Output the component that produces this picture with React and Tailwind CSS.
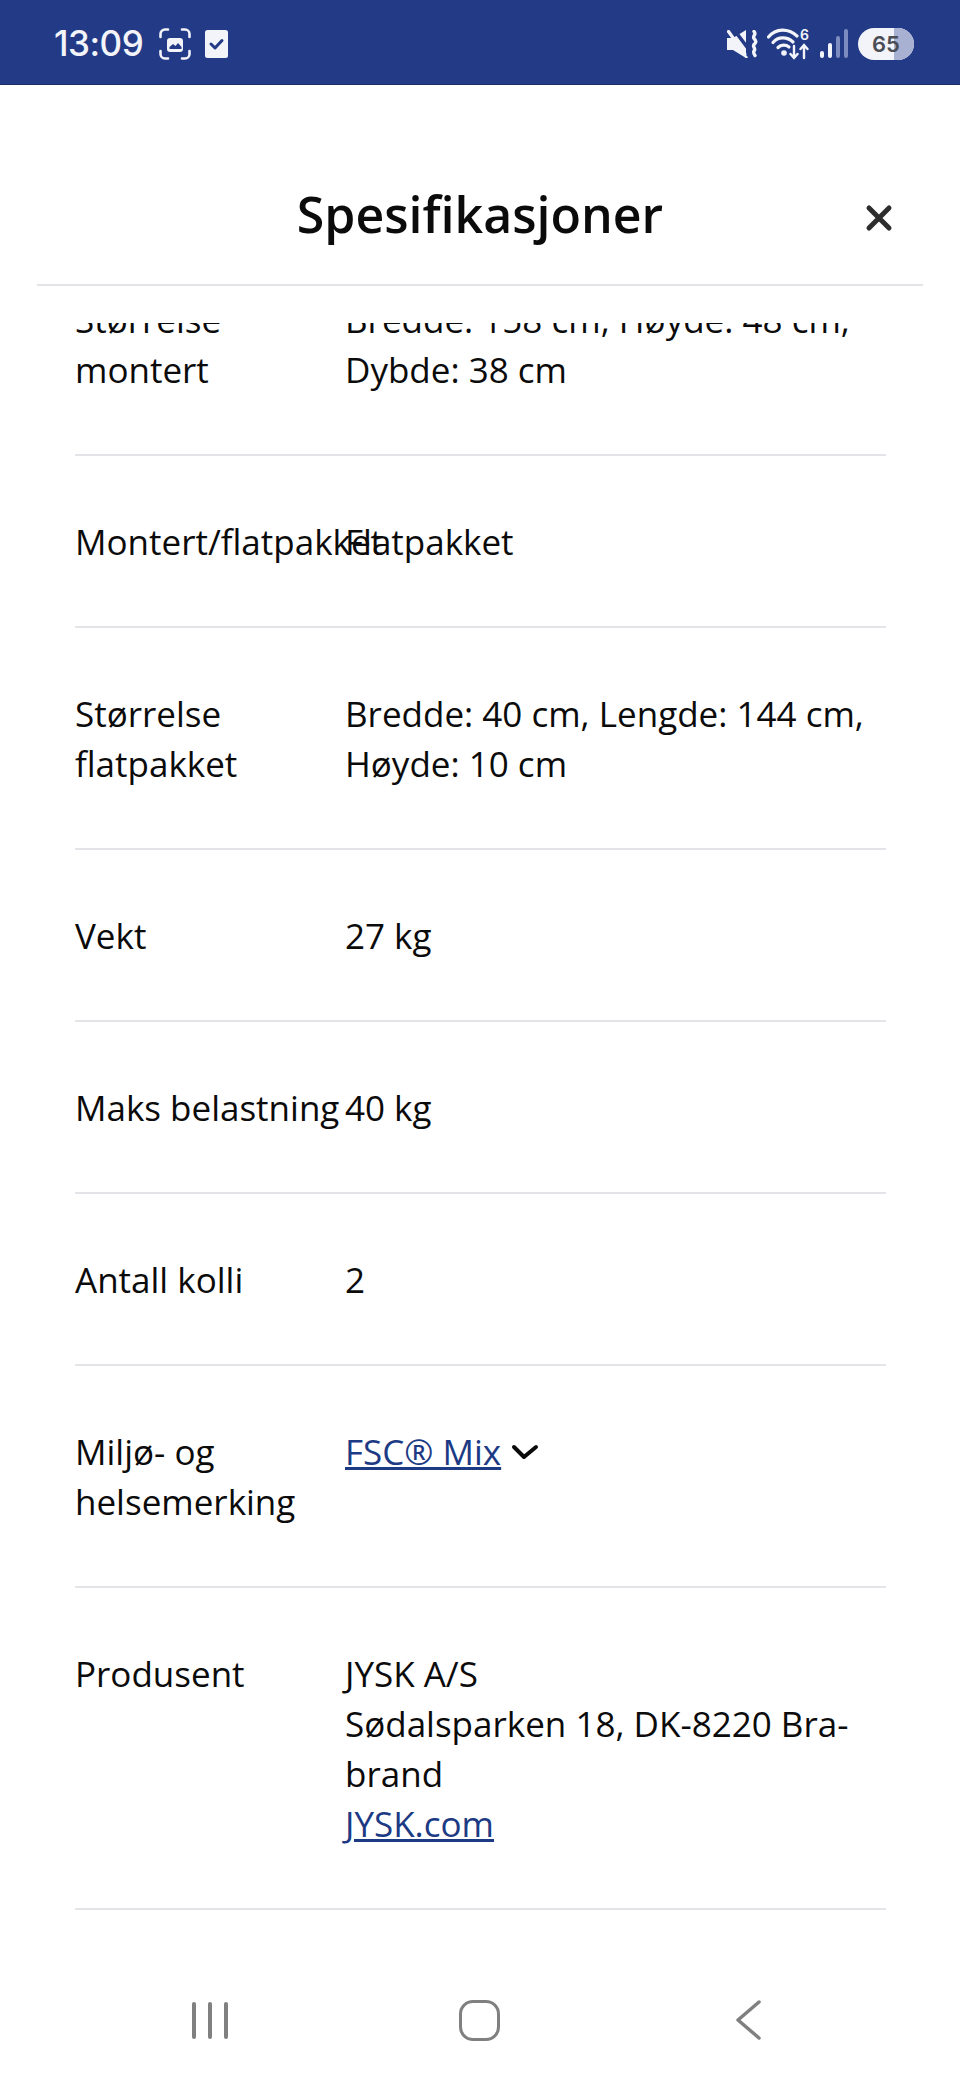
import React from "react";

const rows = [
  { label: "Størrelse montert", value: "Bredde: 158 cm, Høyde: 48 cm, Dybde: 38 cm" },
  { label: "Montert/flatpakket", value: "Flatpakket" },
  { label: "Størrelse flatpakket", value: "Bredde: 40 cm, Lengde: 144 cm, Høyde: 10 cm" },
  { label: "Vekt", value: "27 kg" },
  { label: "Maks belastning", value: "40 kg" },
  { label: "Antall kolli", value: "2" },
];

function StatusLeft() {
  return (
    <div className="flex items-center">
      <span className="w-[88px] text-[35px] font-medium leading-none text-[#f2f4fa] font-['Inter',sans-serif] tracking-[-0.5px]">13:09</span>
      <svg width="32" height="32" viewBox="0 0 32 32" fill="none" className="ml-[17px]" stroke="#f2f4fa" strokeWidth="2.6" strokeLinecap="round">
        <path d="M1.500 9V6a4.500 4.500 0 0 1 4.500-4.500h3M23 1.500h3a4.500 4.500 0 0 1 4.500 4.500v3M30.500 23v3a4.500 4.500 0 0 1-4.500 4.500h-3M9 30.500H6a4.500 4.500 0 0 1-4.500-4.500v-3" />
        <rect x="8" y="10" width="16" height="14" rx="3" fill="#f2f4fa" stroke="none" />
        <path d="M10.500 21v-2l3.500-3 2.500 2 2.500-3 3.500 4v2z" fill="#233b86" stroke="none" />
      </svg>
      <svg width="23" height="28" viewBox="0 0 23 28" className="ml-[14px]">
        <rect width="23" height="28" rx="2.500" fill="#f2f4fa" />
        <path d="M6 14l4 4 7-7.500" fill="none" stroke="#233b86" strokeWidth="3" strokeLinecap="round" strokeLinejoin="round" />
      </svg>
    </div>
  );
}

function StatusRight() {
  return (
    <div className="flex items-center">
      <svg width="32" height="28" viewBox="0 0 32 28" fill="#f2f4fa">
        <path d="M0 8h6L19 0v28L6 20H0z" />
        <path d="M5 -3l21 28" stroke="#233b86" strokeWidth="3.500" />
        <path d="M1.500 1.500l18 25" stroke="#f2f4fa" strokeWidth="3.200" strokeLinecap="round" />
        <path d="M20 24l6 6" stroke="#233b86" strokeWidth="3" />
        <path d="M27 1.500c3 3-2 4.500 0 7 2.500 2.500 2.500 3.500 0 6-2 2.500 2.500 4 0 6.500-1 1.500 0 3 1 4.500" fill="none" stroke="#f2f4fa" strokeWidth="3.400" strokeLinecap="round" />
      </svg>
      <div className="relative ml-[8px] h-[32px] w-[42px]">
        <svg width="42" height="32" viewBox="0 0 42 32" fill="none" stroke="#f2f4fa" strokeLinecap="round">
          <path d="M1.500 9C9 0 21 0 30 8" strokeWidth="3.200" />
          <path d="M6 14.500c5-6 14-6 20-.5" strokeWidth="3.200" />
          <path d="M11 19.500c3-3 8-3 11-.5" strokeWidth="3.200" />
          <circle cx="17" cy="25" r="2.800" fill="#f2f4fa" stroke="none" />
          <path d="M27 18v12M23.500 26l3.500 4 3.500-4M37 30V17M33.500 21l3.500-4 3.500 4" strokeWidth="2.400" />
        </svg>
        <span className="absolute right-0 top-0 text-[14px] font-semibold leading-none text-[#f2f4fa] font-['Inter',sans-serif]">6</span>
      </div>
      <div className="ml-[11px] flex items-end gap-[4px]">
        <span className="h-[7px] w-[4px] rounded-full bg-[#f2f4fa]" />
        <span className="h-[15px] w-[4px] rounded-full bg-[#f2f4fa]" />
        <span className="h-[22px] w-[4px] rounded-full bg-[#7d8cbf]" />
        <span className="h-[29px] w-[4px] rounded-full bg-[#7d8cbf]" />
      </div>
      <div className="relative ml-[10px] flex h-[32px] w-[56px] items-center justify-center overflow-hidden rounded-full bg-[#f2f4fa]">
        <div className="absolute inset-y-0 right-0 w-[20px] bg-[#a9b1d3]" />
        <span className="relative text-[22px] font-semibold leading-none text-[#4b4d55] font-['Inter',sans-serif]">65</span>
      </div>
    </div>
  );
}

function SpecRow({ label, children }) {
  return (
    <div className="grid grid-cols-[270px_1fr] border-b-2 border-[#e2e4e7] pt-[61px] pb-[59px]">
      <div className="pr-1">{label}</div>
      <div>{children}</div>
    </div>
  );
}

export default function App() {
  return (
    <div className="flex h-[2080px] w-[960px] flex-col overflow-hidden bg-white text-[#0b0b0b] font-['Open_Sans',sans-serif]">
      <div className="flex h-[85px] shrink-0 items-center justify-between border-b border-[#1b2c66] bg-[#233b86] pl-[54px] pr-[46px] pt-[3px]">
        <StatusLeft />
        <StatusRight />
      </div>

      <div className="relative mx-[37px] flex h-[201px] shrink-0 items-center justify-center border-b-2 border-[#e2e4e7] pt-[58px]">
        <h1 className="text-[50px] font-semibold leading-none">Spesifikasjoner</h1>
        <svg width="28" height="28" viewBox="0 0 28 28" className="absolute right-[30px] top-[119px]" stroke="#2d2d2d" strokeWidth="5" strokeLinecap="round">
          <path d="M4 4l20 20M24 4L4 24" />
        </svg>
      </div>

      {/* list is scrolled a little, so the first row sits under the header edge */}
      <div className="mt-[37px] h-[1637px] shrink-0 overflow-hidden pl-[75px] pr-[74px] text-[35px] leading-[50px]">
        <div className="-mt-[89px]">
          {rows.map((r) => (
            <SpecRow key={r.label} label={r.label}>
              {r.value}
            </SpecRow>
          ))}
          <SpecRow label="Miljø- og helsemerking">
            <span className="inline-flex items-center">
              <a className="text-[#1d3a84] underline">FSC® Mix</a>
              <svg width="30" height="20" viewBox="0 0 30 20" fill="none" stroke="#0b0b0b" strokeWidth="4" strokeLinecap="round" strokeLinejoin="round" className="ml-[9px]">
                <path d="M4 5l10 10L26 5" />
              </svg>
            </span>
          </SpecRow>
          <SpecRow label="Produsent">
            JYSK A/S
            <br />
            Sødalsparken 18, DK-8220 Bra-
            <br />
            brand
            <br />
            <a className="text-[#1d3a84] underline">JYSK.com</a>
          </SpecRow>
        </div>
      </div>

      <div className="flex h-[120px] shrink-0 items-center bg-white pl-[192px]">
        <div className="flex gap-[12.500px]">
          <span className="h-[37px] w-[3.500px] rounded-full bg-[#808080]" />
          <span className="h-[37px] w-[3.500px] rounded-full bg-[#808080]" />
          <span className="h-[37px] w-[3.500px] rounded-full bg-[#808080]" />
        </div>
        <span className="ml-[231px] h-[41px] w-[41px] rounded-[14px] border-[3.500px] border-[#808080]" />
        <svg width="25" height="40" viewBox="0 0 25 40" fill="none" stroke="#808080" strokeWidth="3.500" strokeLinecap="round" strokeLinejoin="round" className="ml-[236px]">
          <path d="M23 2L2 20l21 18" />
        </svg>
      </div>
    </div>
  );
}
